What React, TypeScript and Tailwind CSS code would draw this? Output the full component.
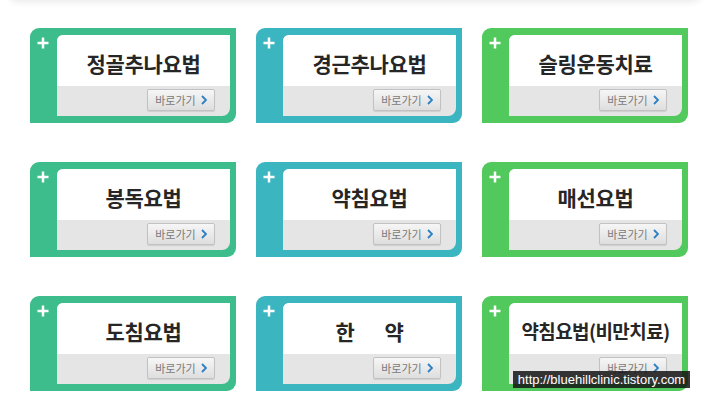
import type { ReactNode } from 'react'

type Item = { title: ReactNode; color: string; tight?: boolean }

const items: Item[] = [
  { title: '정골추나요법', color: 'bg-[#3cbd8b]' },
  { title: '경근추나요법', color: 'bg-[#3bb6c1]' },
  { title: '슬링운동치료', color: 'bg-[#51c95c]' },
  { title: '봉독요법', color: 'bg-[#3cbd8b]' },
  { title: '약침요법', color: 'bg-[#3bb6c1]' },
  { title: '매선요법', color: 'bg-[#51c95c]' },
  { title: '도침요법', color: 'bg-[#3cbd8b]' },
  {
    title: (
      <span className="flex gap-[30px]">
        <span>한</span>
        <span>약</span>
      </span>
    ),
    color: 'bg-[#3bb6c1]',
  },
  { title: '약침요법(비만치료)', color: 'bg-[#51c95c]', tight: true },
]

function Plus() {
  return (
    <svg width="12" height="12" viewBox="0 0 12 12">
      <path d="M6 0.5v11M0.5 6h11" stroke="white" strokeWidth="2.5" />
    </svg>
  )
}

function Card({ item }: { item: Item }) {
  return (
    <div className={`flex h-[95px] rounded-tl-[9px] rounded-br-[9px] ${item.color} pt-[7px] pb-[7px] pr-[6px]`}>
      {/* left strip with plus */}
      <div className="w-[27px] flex justify-center pt-[2px] pr-[2px]">
        <Plus />
      </div>
      {/* inner panel */}
      <div className="flex-1 flex flex-col rounded-tl-[6px] rounded-br-[8px] overflow-hidden bg-[#e5e5e5]">
        <div
          className={`h-[51px] bg-white flex items-center justify-center pt-[6px] font-bold text-[#262626] font-['Noto_Sans_CJK_KR',sans-serif] ${
            item.tight ? 'text-[19px] tracking-[-0.6px]' : 'text-[21px] tracking-[-0.3px]'
          }`}
        >
          {item.title}
        </div>
        <div className="flex-1 flex justify-end items-start pt-[3px] pr-[15px]">
          <div className="w-[68px] h-[22px] flex items-center justify-center gap-[5px] rounded-[2px] border border-[#c2c2c2] bg-gradient-to-b from-[#f6f6f6] to-[#dedede] shadow-[0_1px_1px_rgba(0,0,0,0.1)]">
            <span className="text-[11px] text-[#7a7a7a] font-['Noto_Sans_CJK_KR',sans-serif] leading-none">바로가기</span>
            <svg width="6" height="10" viewBox="0 0 6 10">
              <path d="M1 1l4 4-4 4" stroke="#2b7fc4" strokeWidth="1.8" fill="none" />
            </svg>
          </div>
        </div>
      </div>
    </div>
  )
}

export default function App() {
  return (
    <div className="relative h-[405px] w-[710px] bg-white overflow-hidden">
      {/* faint shadow of the block above */}
      <div className="absolute -top-[20px] left-[8px] right-[8px] h-[20px] rounded-b-[10px] bg-white shadow-[0_2px_7px_rgba(0,0,0,0.09)]" />

      <div className="pl-[30px] pt-[28px] grid grid-cols-[206px_206px_206px] gap-x-[20px] gap-y-[39px]">
        {items.map((item, i) => (
          <Card key={i} item={item} />
        ))}
      </div>

      {/* watermark */}
      <div className="absolute left-[513px] top-[371px] w-[177px] h-[17px] bg-[rgba(20,20,20,0.85)] flex items-center justify-center text-white text-[13px] font-['Liberation_Sans',sans-serif]">
        http://bluehillclinic.tistory.com
      </div>
    </div>
  )
}
